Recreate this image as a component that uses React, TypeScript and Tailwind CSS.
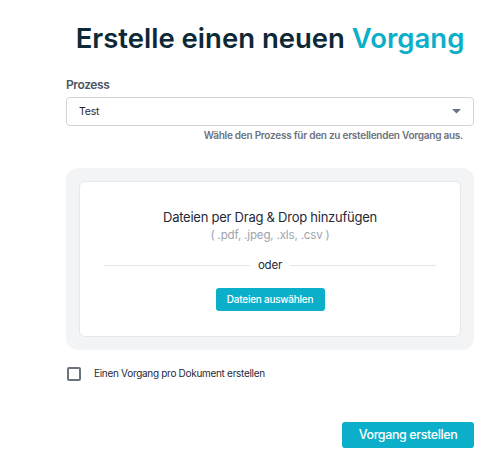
import React from 'react';

const App = () => {
  return (
    <div className="min-h-[473px] bg-white font-['Inter',sans-serif]">
      <div className="ml-[66px] w-[408px] pt-[20px]">
        <h1 className="whitespace-nowrap text-center text-[27.5px] font-semibold leading-[36px] text-[#0d2836]">
          Erstelle einen neuen <span className="text-[#0bafc9]">Vorgang</span>
        </h1>

        <div className="mt-[21px]">
          <label className="block text-[12px] font-semibold leading-[16px] tracking-[-0.4px] text-[#4b5563]">Prozess</label>
          <div className="mt-[4px] flex h-[29px] items-center justify-between rounded-[4px] border border-[#d1d5db] pl-[12px] pr-[11px]">
            <span className="text-[10.5px] tracking-[-0.2px] text-[#1f2937]">Test</span>
            <svg width="9" height="5" viewBox="0 0 9 5" className="mr-[1px]">
              <path d="M0 0 L9 0 L4.5 4.5 Z" fill="#6b7280" />
            </svg>
          </div>
          <p className="mt-[2px] pr-[11px] text-right text-[10px] font-semibold leading-[14px] tracking-[-0.25px] text-[#6b7280]">
            Wähle den Prozess für den zu erstellenden Vorgang aus.
          </p>
        </div>

        <div className="mt-[26px] rounded-[12px] bg-[#f3f4f6] p-[13px]">
          <div className="flex h-[156px] flex-col items-center rounded-[6px] border border-[#e5e7eb] bg-white pt-[26px]">
            <p className="text-[13px] leading-[18px] tracking-[-0.25px] text-[#1f2937]">Dateien per Drag &amp; Drop hinzufügen</p>
            <p className="mt-[1px] text-[11.5px] leading-[16px] tracking-[-0.15px] text-[#9ca3af]">( .pdf, .jpeg, .xls, .csv )</p>
            <div className="mt-[14px] flex w-[332px] items-center gap-[8px]">
              <div className="h-px flex-1 bg-[#e5e7eb]" />
              <span className="text-[11.5px] leading-[16px] tracking-[-0.2px] text-[#1f2937]">oder</span>
              <div className="h-px flex-1 bg-[#e5e7eb]" />
            </div>
            <button className="mt-[15px] h-[23px] w-[109px] rounded-[3px] bg-[#0bafc9] text-[10px] font-medium tracking-[-0.25px] text-white">
              Dateien auswählen
            </button>
          </div>
        </div>

        <label className="mt-[16px] flex items-center">
          <span className="ml-[1px] h-[14px] w-[14px] rounded-[2px] border-2 border-[#6b7280]" />
          <span className="ml-[13px] text-[10px] tracking-[-0.3px] text-[#1f2937]">Einen Vorgang pro Dokument erstellen</span>
        </label>

        <div className="mt-[41px] flex justify-end">
          <button className="h-[26px] w-[132px] rounded-[3px] bg-[#0bafc9] text-[12.5px] font-medium tracking-[-0.4px] text-white">
            Vorgang erstellen
          </button>
        </div>
      </div>
    </div>
  );
};

export default App;
